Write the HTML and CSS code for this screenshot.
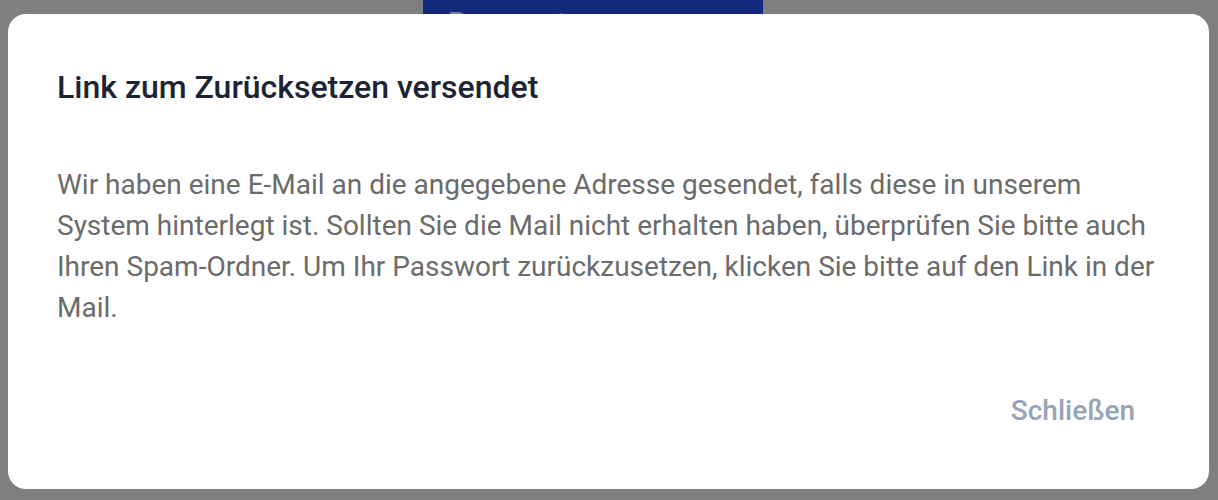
FILE: index.html
```html
<!DOCTYPE html>
<html lang="de">

<head>
  <meta charset="UTF-8" />
  <meta name="viewport" content="width=device-width, initial-scale=1.0" />
  <title>Passwort zurücksetzen</title>
  <link rel="stylesheet" href="styles.css">
</head>

<body>
  <div class="page">
    <button class="submit">Passwort zurücksetzen</button>
  </div>

  <div class="overlay">
    <div class="dialog" role="dialog">
      <h2 class="dialog-title">Link zum Zurücksetzen versendet</h2>
      <p class="dialog-text">
        Wir haben eine E-Mail an die angegebene Adresse gesendet, falls diese in unserem
        System hinterlegt ist. Sollten Sie die Mail nicht erhalten haben, überprüfen Sie bitte auch
        Ihren Spam-Ordner. Um Ihr Passwort zurückzusetzen, klicken Sie bitte auf den Link in der
        Mail.
      </p>
      <div class="dialog-actions">
        <button class="btn-text">Schließen</button>
      </div>
    </div>
  </div>
</body>

</html>
```

FILE: styles.css
```css
body {
  font-family: Roboto, 'Noto Sans', Arial, sans-serif;
  background-color: #fff;
  margin: 0;
  height: 500px;
  overflow: hidden;
}

.page {
  padding-left: 423px;
}

.submit {
  width: 340px;
  height: 60px;
  padding: 9px 25px 0;
  border: none;
  background-color: #2254f8;
  color: #fff;
  font-family: inherit;
  font-size: 28px;
  font-weight: 500;
  line-height: 28px;
  text-align: left;
  vertical-align: top;
}

.overlay {
  position: fixed;
  inset: 0;
  background-color: rgba(0, 0, 0, 0.5);
  padding: 14px 9px 11px 8px;
  display: flex;
}

.dialog {
  flex: 1;
  background: #fff;
  border-radius: 18px;
  padding: 53px 48px 0 49px;
}

.dialog-title {
  margin: 0;
  color: #1c2433;
  font-size: 32px;
  font-weight: 500;
  line-height: 40px;
}

.dialog-text {
  margin: 57px 0 0;
  color: #6b6b6b;
  font-size: 28px;
  line-height: 41px;
}

.dialog-actions {
  display: flex;
  justify-content: flex-end;
  margin-top: 54px;
}

.btn-text {
  border: none;
  background: none;
  padding: 12px 26px;
  color: #97a3b6;
  font-family: inherit;
  font-size: 28px;
  font-weight: 500;
}
```
